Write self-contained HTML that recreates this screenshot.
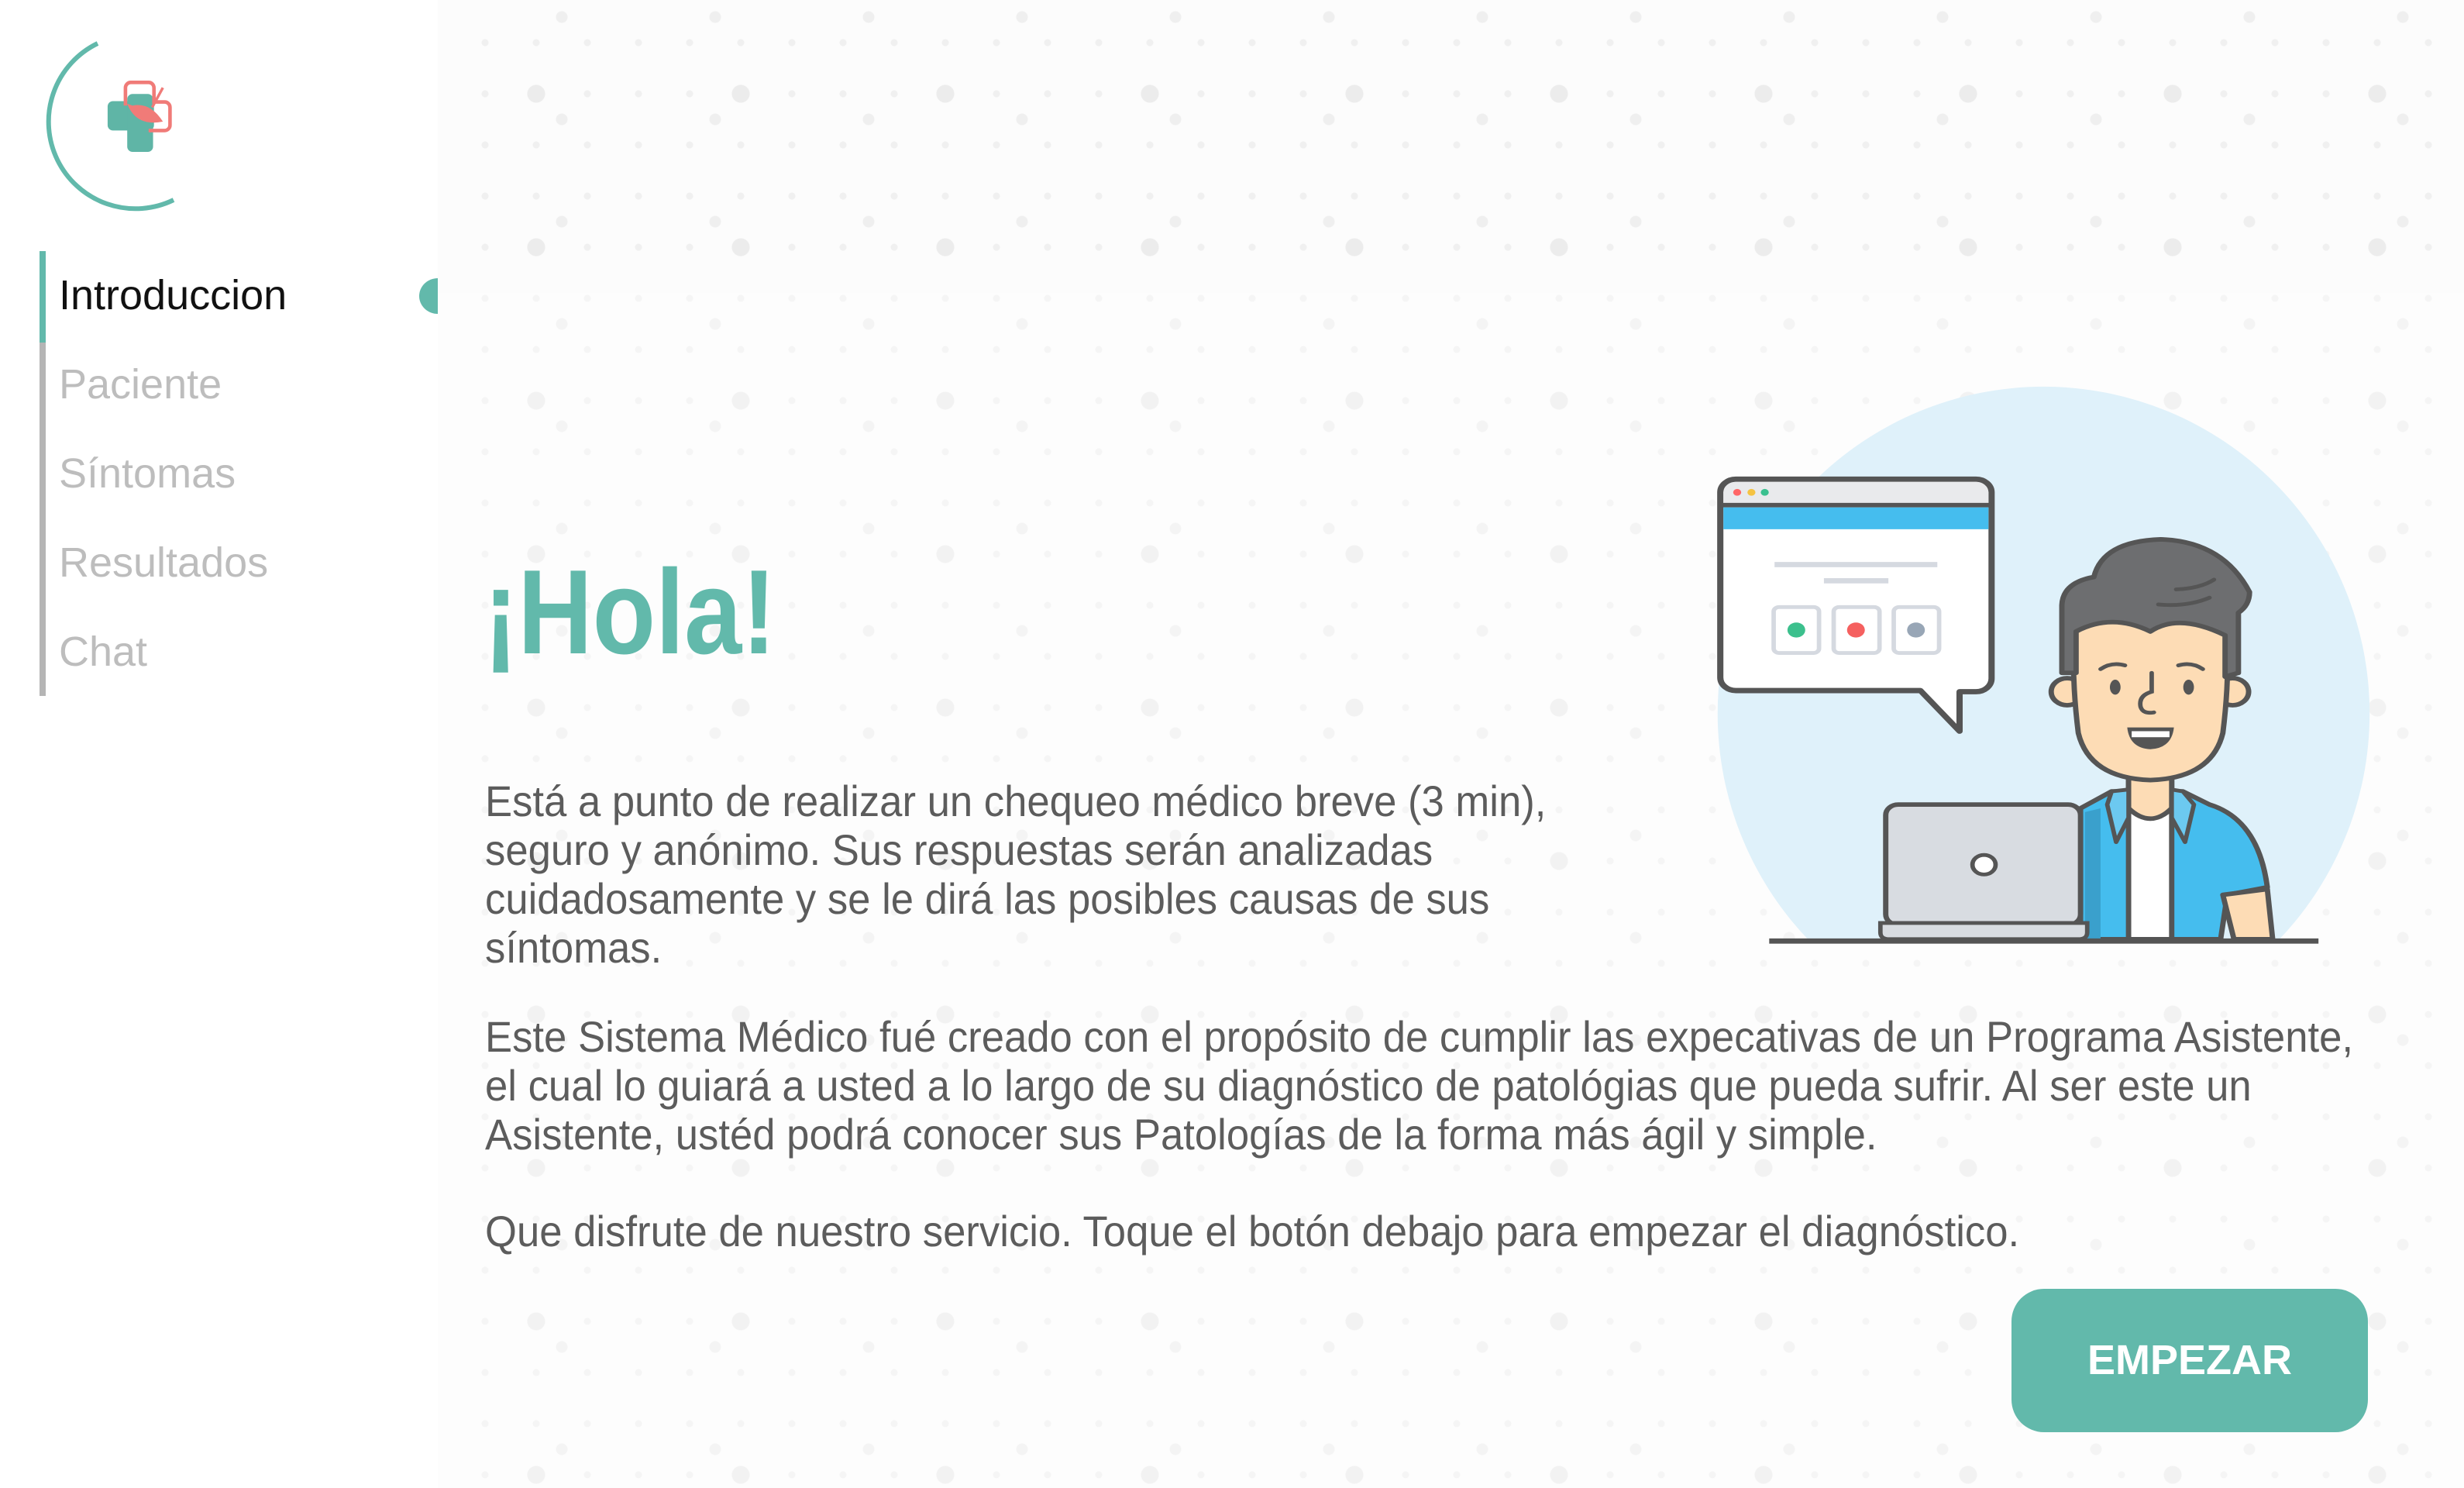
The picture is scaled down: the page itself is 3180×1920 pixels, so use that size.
<!DOCTYPE html>
<html><head><meta charset="utf-8">
<style>
html,body{margin:0;padding:0;}
body{width:3180px;height:1920px;position:relative;overflow:hidden;background:#fff;font-family:"Liberation Sans",sans-serif;}
#main{position:absolute;left:565px;top:0;width:2615px;height:1920px;background-color:#fcfcfc;
background-image:
radial-gradient(circle,#ececec 0 11px,transparent 12px),
radial-gradient(circle,#efefef 0 7px,transparent 8px),
radial-gradient(circle,#f0f0f0 0 4px,transparent 5px);
background-size:264px 198px,198px 132px,66px 66px;
background-position:-5px 22px,61px 88px,28px 22px;}
.card{position:absolute;left:565px;top:378px;width:2615px;height:1542px;background:rgba(255,255,255,0.35);}
.nav{position:absolute;left:76px;font-size:54px;color:#bdbdbd;}
.p{position:absolute;left:626px;font-size:56px;color:#5c5c5c;white-space:nowrap;transform:scaleX(0.94);transform-origin:0 0;line-height:63px;}
</style></head><body>
<div id="main"></div>
<div class="card"></div>

<svg style="position:absolute;left:0;top:0" width="300" height="300" viewBox="0 0 300 300">
<path d="M126 56 A105 105 0 1 0 224 258" fill="none" stroke="#62b9ab" stroke-width="6"/>
<g transform="translate(178 150) scale(1.15) translate(-154 -150)">
<rect x="120" y="133" width="52" height="33" rx="6" fill="#5fb5a6"/>
<rect x="142" y="125" width="29" height="65" rx="6" fill="#5fb5a6"/>
<path d="M146 112 h20 a6 6 0 0 1 6 6 v16 h12 a6 6 0 0 1 6 6 v20 a6 6 0 0 1 -6 6 h-18 M146 112 a6 6 0 0 0 -6 6 v20" fill="none" stroke="#f07b78" stroke-width="4"/>
<path d="M142 136 q10 26 40 20 q-14 -22 -34 -18 z" fill="#f07b78"/>
<path d="M170 140 l12 -22" stroke="#f07b78" stroke-width="3"/>
</g>
</svg>

<div style="position:absolute;left:51px;top:324px;width:8px;height:118px;background:#62b9ab"></div>
<div style="position:absolute;left:51px;top:442px;width:8px;height:456px;background:#b5b5b5"></div>
<div class="nav" style="top:350px;color:#111">Introduccion</div>
<div class="nav" style="top:465px">Paciente</div>
<div class="nav" style="top:580px">Síntomas</div>
<div class="nav" style="top:695px">Resultados</div>
<div class="nav" style="top:810px">Chat</div>
<div style="position:absolute;left:541px;top:359px;width:48px;height:46px;border-radius:50%;background:#62b9ab;clip-path:inset(0 24px 0 0)"></div>

<div style="position:absolute;left:624px;top:700px;font-size:155px;font-weight:bold;color:#62b9ab;transform:scaleX(0.86);transform-origin:0 0;line-height:180px;">¡Hola!</div>

<div class="p" style="top:1002px">Está a punto de realizar un chequeo médico breve (3 min),<br>seguro y anónimo. Sus respuestas serán analizadas<br>cuidadosamente y se le dirá las posibles causas de sus<br>síntomas.</div>
<div class="p" style="top:1306px">Este Sistema Médico fué creado con el propósito de cumplir las expecativas de un Programa Asistente,<br>el cual lo guiará a usted a lo largo de su diagnóstico de patológias que pueda sufrir. Al ser este un<br>Asistente, ustéd podrá conocer sus Patologías de la forma más ágil y simple.</div>
<div class="p" style="top:1557px">Que disfrute de nuestro servicio. Toque el botón debajo para empezar el diagnóstico.</div>

<div style="position:absolute;left:2596px;top:1663px;width:460px;height:185px;border-radius:42px;background:#62b9ab;color:#fff;font-weight:bold;font-size:54px;text-align:center;line-height:185px;">EMPEZAR</div>

<svg style="position:absolute;left:2180px;top:480px" width="900" height="760" viewBox="0 0 1568 1566" preserveAspectRatio="none">
<defs><clipPath id="c"><rect x="0" y="0" width="1568" height="1513"/></clipPath></defs>
<ellipse cx="797" cy="908" rx="733" ry="869" fill="#dff1fa" clip-path="url(#c)"/>
<path d="M105 285 H645 a35 35 0 0 1 35 35 V815 a35 35 0 0 1 -35 35 H608 V955 L520 847 H105 a35 35 0 0 1 -35 -35 V320 a35 35 0 0 1 35 -35z" fill="#fff" stroke="#555" stroke-width="14" stroke-linejoin="round"/>
<path d="M77 352 V320 a28 28 0 0 1 28 -28 H645 a28 28 0 0 1 28 28 V352z" fill="#e9eaec"/>
<line x1="70" y1="354" x2="680" y2="354" stroke="#555" stroke-width="12"/>
<rect x="77" y="360" width="596" height="58" fill="#45bdee"/>
<circle cx="108" cy="320" r="9" fill="#f66"/><circle cx="140" cy="320" r="9" fill="#f5c342"/><circle cx="170" cy="320" r="9" fill="#3ac08f"/>
<line x1="192" y1="512" x2="558" y2="512" stroke="#d5d9e0" stroke-width="14"/>
<line x1="303" y1="555" x2="448" y2="555" stroke="#d5d9e0" stroke-width="14"/>
<g fill="#fff" stroke="#d5d9e0" stroke-width="10">
<rect x="190" y="625" width="102" height="122" rx="12"/><rect x="325" y="625" width="103" height="122" rx="12"/><rect x="460" y="625" width="102" height="122" rx="12"/></g>
<circle cx="241" cy="686" r="20" fill="#3cc08d"/><circle cx="375" cy="686" r="20" fill="#f5605f"/><circle cx="510" cy="686" r="20" fill="#98a6b6"/>
<path d="M880 1160 L950 1115 L1110 1115 L1170 1150 Q1280 1190 1300 1370 L1210 1390 L1195 1508 H880z" fill="#45bdee" stroke="#555" stroke-width="12" stroke-linejoin="round"/>
<path d="M890 1170 L925 1160 V1508 H890z" fill="#3aa0cc"/>
<path d="M1200 1390 L1300 1375 L1312 1508 H1225z" fill="#fddcb5" stroke="#555" stroke-width="12" stroke-linejoin="round"/>
<path d="M988 1080 V1508 H1085 V1080z" fill="#fff" stroke="#555" stroke-width="12"/>
<path d="M988 1080 V1160 Q1037 1215 1085 1160 V1080z" fill="#fddcb5" stroke="#555" stroke-width="12"/>
<path d="M950 1115 L940 1150 L960 1250 L988 1185 V1110z" fill="#6cc9f0" stroke="#555" stroke-width="10" stroke-linejoin="round"/>
<path d="M1110 1115 L1135 1150 L1115 1250 L1085 1185 V1110z" fill="#6cc9f0" stroke="#555" stroke-width="10" stroke-linejoin="round"/>
<circle cx="850" cy="850" r="36" fill="#fddcb5" stroke="#555" stroke-width="12"/>
<circle cx="1222" cy="850" r="36" fill="#fddcb5" stroke="#555" stroke-width="12"/>
<path d="M865 680 Q860 820 875 960 Q900 1080 1037 1085 Q1175 1080 1200 960 Q1215 820 1210 680 Q1040 620 865 680z" fill="#fddcb5" stroke="#555" stroke-width="12"/>
<path d="M838 800 V620 Q840 560 910 545 Q930 450 1060 445 Q1200 450 1260 585 Q1260 620 1235 640 V800 L1205 810 V700 Q1100 640 1037 690 Q950 640 870 690 V800z" fill="#6d6e70" stroke="#555" stroke-width="12" stroke-linejoin="round"/>
<path d="M1095 578 Q1150 575 1180 552 M1055 618 Q1120 625 1170 600" fill="none" stroke="#555" stroke-width="10" stroke-linecap="round"/>
<path d="M925 790 Q950 770 980 780 M1100 780 Q1130 770 1155 790" fill="none" stroke="#555" stroke-width="10" stroke-linecap="round"/>
<ellipse cx="958" cy="838" rx="12" ry="20" fill="#555"/><ellipse cx="1123" cy="838" rx="12" ry="20" fill="#555"/>
<path d="M1040 800 V850 Q1010 860 1015 890 Q1020 910 1045 905" fill="none" stroke="#555" stroke-width="10" stroke-linecap="round"/>
<path d="M985 945 H1090 Q1085 1000 1037 1003 Q990 1000 985 945z" fill="#555"/>
<rect x="995" y="955" width="85" height="16" fill="#fff"/>
<rect x="442" y="1150" width="438" height="320" rx="28" fill="#d8dce1" stroke="#555" stroke-width="12"/>
<circle cx="663" cy="1310" r="26" fill="#fff" stroke="#555" stroke-width="10"/>
<path d="M430 1465 H895 V1490 Q895 1508 875 1508 H450 Q430 1508 430 1490z" fill="#d8dce1" stroke="#555" stroke-width="10"/>
<line x1="180" y1="1513" x2="1415" y2="1513" stroke="#555" stroke-width="14"/>
</svg>
</body></html>
